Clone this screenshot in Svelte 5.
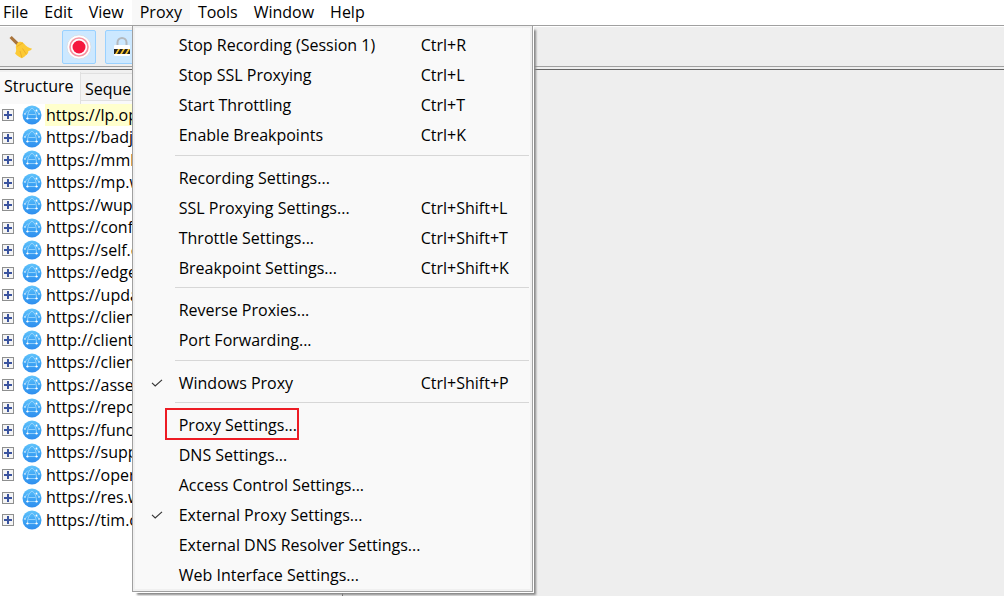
<script>
  const menus = ['File', 'Edit', 'View', 'Proxy', 'Tools', 'Window', 'Help'];
  const groups = [
    [
      { label: 'Stop Recording (Session 1)', keys: 'Ctrl+R' },
      { label: 'Stop SSL Proxying', keys: 'Ctrl+L' },
      { label: 'Start Throttling', keys: 'Ctrl+T' },
      { label: 'Enable Breakpoints', keys: 'Ctrl+K' }
    ],
    [
      { label: 'Recording Settings...' },
      { label: 'SSL Proxying Settings...', keys: 'Ctrl+Shift+L' },
      { label: 'Throttle Settings...', keys: 'Ctrl+Shift+T' },
      { label: 'Breakpoint Settings...', keys: 'Ctrl+Shift+K' }
    ],
    [{ label: 'Reverse Proxies...' }, { label: 'Port Forwarding...' }],
    [{ label: 'Windows Proxy', keys: 'Ctrl+Shift+P', checked: true }],
    [
      { label: 'Proxy Settings...', marked: true },
      { label: 'DNS Settings...' },
      { label: 'Access Control Settings...' },
      { label: 'External Proxy Settings...', checked: true },
      { label: 'External DNS Resolver Settings...' },
      { label: 'Web Interface Settings...' }
    ]
  ];
  const hosts = [
    'https://lp.op', 'https://badj', 'https://mmb', 'https://mp.w', 'https://wup.',
    'https://conf', 'https://self.e', 'https://edge', 'https://upda', 'https://clien',
    'http://client', 'https://clien', 'https://asse', 'https://repo', 'https://func',
    'https://supp', 'https://oper', 'https://res.w', 'https://tim.c'
  ];
  let selected = $state(0);
</script>

<div class="window">
  <nav class="menubar" aria-label="Main menu">
    {#each menus as name}
      <div class="menu">
        <button class="title" class:open={name === 'Proxy'}>{name}</button>
        {#if name === 'Proxy'}
          <div class="popup" role="menu">
            {#each groups as items}
              <div class="group" role="group">
                {#each items as item}
                  <button class="item" class:marked={item.marked} role="menuitem">
                    <span class="check">
                      {#if item.checked}
                        <svg width="12" height="8" viewBox="0 0 12 8"><path d="M1 3.8 4.2 7 11 .8" fill="none" stroke="#333" stroke-width="1.1" /></svg>
                      {/if}
                    </span>
                    <span class="label">{item.label}</span>
                    <span class="keys">{item.keys ?? ''}</span>
                  </button>
                {/each}
              </div>
            {/each}
          </div>
        {/if}
      </div>
    {/each}
  </nav>

  <div class="toolbar">
    <div class="tools">
      <button class="tool" aria-label="Clear session">
        <svg width="26" height="26" viewBox="0 0 26 26">
          <path d="M2.500 4 4.700 2 12.500 9.600 10.300 12Z" fill="#a9743c" />
          <path d="M12.500 7.800c1.800-.4 3.400.4 4.600 2 2 2.800 4.800 4.200 8 5-1.200 1.600-2.600 2.200-3.800 2.200.2 1.600-.6 3-1.800 3.600-1.400 2-3 3-4.600 3.600-2-.6-4.600-2-6.800-4.600 1-1.600 1.300-3 .9-5-.6-3 .9-6 3.500-6.800Z" fill="#fcca35" />
          <path d="M10 12.500 16 8.800M14.800 23.500 13 17M19.500 20.500 15.500 14.500" stroke="#eeb02a" fill="none" />
        </svg>
      </button>
    </div>
    <div class="tools">
      <button class="tool on" aria-label="Stop recording">
        <svg width="26" height="26" viewBox="0 0 26 26">
          <circle cx="13" cy="13" r="12" fill="#fff" stroke="#d5dbe2" stroke-width=".8" />
          <circle cx="13" cy="13" r="9" fill="#fff" stroke="#f792a0" stroke-width="1.600" />
          <circle cx="13" cy="13" r="6.500" fill="#f5173d" />
        </svg>
      </button>
      <button class="tool on" aria-label="Stop SSL proxying">
        <svg width="20" height="22" viewBox="0 0 20 22">
          <path d="M5.500 10V6.500a4.500 4.500 0 0 1 9 0V10" fill="none" stroke="#b4b8bd" stroke-width="2" />
          <rect x="2" y="9" width="16" height="11" rx="1" fill="#fff" />
          <path d="M2 13h16v5H2z" fill="#222" />
          <path d="M3 18 6 13h2l-3 5zM8 18l3-5h2l-3 5zM13 18l3-5h2l-3 5z" fill="#fcc62e" />
        </svg>
      </button>
    </div>
  </div>

  <main class="split">
    <section class="side">
      <div class="tabs" role="tablist">
        <button class="tab active" role="tab" aria-selected="true">Structure</button>
        <button class="tab" role="tab" aria-selected="false">Sequence</button>
      </div>
      <ul class="tree">
        {#each hosts as host, i}
          <li>
            <button class="expand" aria-label="Expand {host}">
              <svg width="12" height="12" viewBox="0 0 12 12"><rect x=".5" y=".5" width="11" height="11" fill="#f4f4f4" stroke="#8e8f8f" /><path d="M2 6h8M6 2v8" stroke="#3a539f" stroke-width="2" /></svg>
            </button>
            <svg width="20" height="20" viewBox="0 0 20 20">
              <defs>
                <linearGradient id="globe" x2="0" y2="1"><stop stop-color="#62c4fb" /><stop offset=".5" stop-color="#3fa6f5" /><stop offset="1" stop-color="#2f8eee" /></linearGradient>
              </defs>
              <circle cx="10" cy="10" r="9.500" fill="url(#globe)" />
              <path d="M5.500 13Q5.500 6 10 3 14.500 6 14.500 13M4 13.500h12M6.500 9.500h7M2.500 9 6 5.500M17.500 9 14 5.500" fill="none" stroke="#a5dafd" stroke-width=".8" />
              <g fill="#fff"><circle cx="5.500" cy="13.500" r="1.100" /><circle cx="14.500" cy="13.500" r="1.100" /><circle cx="3" cy="9" r=".8" /><circle cx="14.500" cy="5.500" r=".9" /><circle cx="17" cy="9" r=".8" /></g>
            </svg>
            <button class="host" class:selected={selected === i} onclick={() => (selected = i)}>{host}</button>
          </li>
        {/each}
      </ul>
    </section>
    <section class="detail"></section>
  </main>
</div>

<style>
  :global(body) { margin: 0; }
  .window {
    display: flex; flex-direction: column; min-height: 100vh; background: #eee; color: #000;
    font: 16px/20px "Open Sans", "Noto Sans", sans-serif;
  }
  button { font: inherit; color: inherit; border: 0; padding: 0; background: none; text-align: left; white-space: nowrap; }
  svg { display: block; flex: none; }

  .menubar { display: flex; height: 25px; background: #fff; border-bottom: 1px solid #a0a0a0; }
  .menu { position: relative; }
  .title { height: 24px; padding: 0 8px; }
  .menu:first-child .title { padding-left: 3px; }
  .title.open { height: 25px; padding-bottom: 1px; background: #f8f8f8; }

  .popup {
    position: absolute; z-index: 2; top: 25px; left: 0; width: 401px; box-sizing: border-box; padding: 3px 3px 2px 2px;
    background: #f9f9f9; border: 1px solid #a0a0a0;
    box-shadow: inset 0 0 0 2px #f0f0f0, 1px 1px 0 #fff, 4px 4px 2px -1px #888;
  }
  .group + .group { border-top: 1px solid #d7d7d7; margin: 6px 0 0 40px; padding-top: 6px; }
  .group:nth-child(2n + 3) { margin-top: 5px; }
  .group + .group .item { margin-left: -40px; }
  .item { display: flex; align-items: center; height: 30px; box-sizing: border-box; padding-top: 1px; position: relative; }
  .item.marked::after { content: ""; position: absolute; top: -1px; left: 30px; width: 130px; height: 28px; border: 2px solid #ed1c24; }
  .check { width: 44px; display: flex; justify-content: center; }
  .label { width: 242px; }
  .keys { width: 100px; }

  .toolbar { display: flex; gap: 25px; align-items: center; height: 39px; padding-left: 3px; border-top: 1px solid #fff; border-bottom: 1px solid #a0a0a0; }
  .tools { display: flex; gap: 9px; }
  .tool { display: flex; align-items: center; justify-content: center; box-sizing: border-box; width: 34px; height: 34px; }
  .tool.on { background: #cce8ff; border: 1px solid #99d1ff; border-radius: 2px; }

  .split { flex: 1; display: flex; margin-top: 2px; border-top: 1px solid #646464; }
  .side { width: 342px; background: #fff; border-right: 1px solid #646464; }
  .tabs { display: flex; align-items: flex-start; height: 34px; box-sizing: border-box; padding-top: 2px; background: linear-gradient(#f0f0f0 31px, #f9f9f9 31px); }
  .tab { height: 28px; margin-top: 1px; padding: 4px 4px 0; box-sizing: border-box; background: #f3f3f3; border: 1px solid #e0e0e0; border-left: 0; }
  .tab.active { height: 32px; width: 81px; margin-top: 0; padding-top: 0; padding-bottom: 4px; background: #f9f9f9; border-width: 0 1px 0 0; }
  .tree { margin: 0; padding: 0; list-style: none; }
  .tree li { display: flex; align-items: center; height: 22px; padding-left: 2px; }
  .tree li:nth-child(even) { height: 23px; }
  .expand { margin-right: 8px; }
  .host { height: 22px; margin-left: 3px; padding: 0 1px 1px; }
  .host.selected { background: #ffffcd; }
  .detail { flex: 1; }
</style>
